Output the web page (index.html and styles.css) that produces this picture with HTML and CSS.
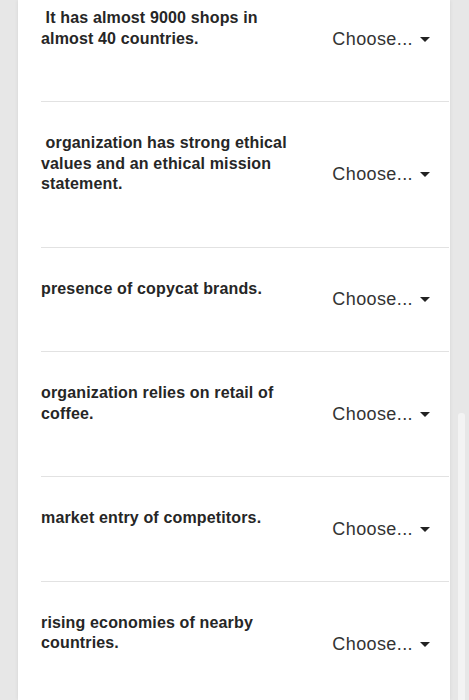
FILE: index.html
```html
<!DOCTYPE html>
<html lang="en">
<head>
<meta charset="utf-8">
<title>Questions</title>
<link rel="stylesheet" href="styles.css">
</head>
<body>
<div class="page">
  <div class="card">
    <div class="list">
      <div class="row">
        <div class="q">&nbsp;It has almost 9000 shops in almost 40 countries.</div>
        <div class="sel">Choose...<span class="caret"></span></div>
      </div>
      <div class="row">
        <div class="q">&nbsp;organization has strong ethical values and an ethical mission statement.</div>
        <div class="sel">Choose...<span class="caret"></span></div>
      </div>
      <div class="row">
        <div class="q">presence of copycat brands.</div>
        <div class="sel">Choose...<span class="caret"></span></div>
      </div>
      <div class="row">
        <div class="q">organization relies on retail of coffee.</div>
        <div class="sel">Choose...<span class="caret"></span></div>
      </div>
      <div class="row">
        <div class="q">market entry of competitors.</div>
        <div class="sel">Choose...<span class="caret"></span></div>
      </div>
      <div class="row">
        <div class="q">rising economies of nearby countries.</div>
        <div class="sel">Choose...<span class="caret"></span></div>
      </div>
    </div>
  </div>
  <div class="gutter"><div class="thumb"></div></div>
</div>
</body>
</html>
```
FILE: styles.css
```css
html, body {
  margin: 0;
  padding: 0;
  height: 700px;
  overflow: hidden;
  background: #e7e7e7;
}
.page {
  display: flex;
  height: 700px;
  font-family: "Liberation Sans", Arial, sans-serif;
}
.card {
  margin-left: 18px;
  width: 432px;
  background: #ffffff;
  box-shadow: 0 0 4px rgba(0, 0, 0, 0.08);
  padding-left: 23px;
  padding-right: 1px;
  box-sizing: border-box;
  overflow: hidden;
}
.list {
  margin-top: -23px;
}
.row {
  display: flex;
  align-items: center;
  border-bottom: 1px solid #e2e2e2;
}
.q {
  width: 262px;
  padding: 31px 0 52px;
  font-size: 16px;
  font-weight: bold;
  letter-spacing: 0.15px;
  line-height: 20.5px;
  color: #262626;
}
.sel {
  margin-left: auto;
  margin-right: 19px;
  margin-top: 1px;
  display: flex;
  align-items: center;
  font-size: 18px;
  letter-spacing: 0.4px;
  color: #333333;
}
.caret {
  margin-left: 7px;
  width: 0;
  height: 0;
  border-left: 5px solid transparent;
  border-right: 5px solid transparent;
  border-top: 5px solid #222222;
}
.gutter {
  flex: 1;
  padding-top: 413px;
  display: flex;
  justify-content: center;
  padding-left: 3px;
}
.thumb {
  width: 7px;
  height: 300px;
  background: #f3f3f3;
  border-radius: 3px;
}
```
